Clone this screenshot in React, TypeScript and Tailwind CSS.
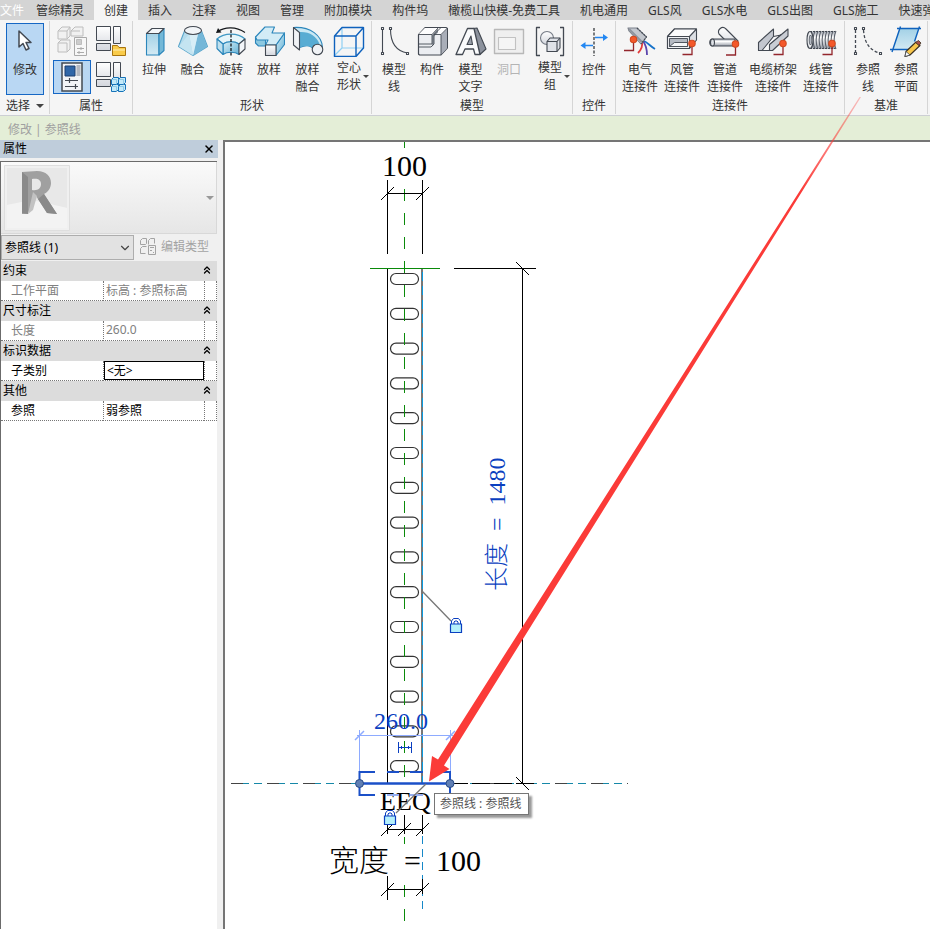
import { ChevronDown, ChevronsUp, X } from "lucide-react";
import { Fragment, useState, type ReactNode } from "react";

const DARK = "#434952";
const BLUE = "#0a3fc0";

type IconProps = { children: ReactNode };

function Icon({ children }: IconProps) {
  return (
    <svg viewBox="0 0 32 32" className="size-8 shrink-0" fill="none" strokeWidth="1.1" strokeLinejoin="round" aria-hidden="true">
      {children}
    </svg>
  );
}

function Gradients() {
  return (
    <svg className="absolute size-0" aria-hidden="true">
      <defs>
        <linearGradient id="ice" x1="0" y1="0" x2="0" y2="1">
          <stop offset="0" stopColor="#a3d1e6" />
          <stop offset="1" stopColor="#d3eaf4" />
        </linearGradient>
        <linearGradient id="sea" x1="0" y1="0" x2="1" y2="1">
          <stop offset="0" stopColor="#d8eff7" />
          <stop offset="1" stopColor="#62b1d6" />
        </linearGradient>
        <linearGradient id="steel" x1="0" y1="0" x2="0" y2="1">
          <stop offset="0" stopColor="#ffffff" />
          <stop offset="1" stopColor="#d3d6dd" />
        </linearGradient>
        <linearGradient id="tube" x1="0" y1="0" x2="0" y2="1">
          <stop offset="0" stopColor="#a2a8b2" />
          <stop offset="0.35" stopColor="#ffffff" />
          <stop offset="1" stopColor="#969ca6" />
        </linearGradient>
      </defs>
    </svg>
  );
}

function ConnectorDot({ x, y }: { x: number; y: number }) {
  return (
    <g>
      <path d={`M${x} ${y}v11h-9.500`} stroke="#93262c" strokeWidth="1.300" strokeLinejoin="miter" />
      <circle cx={x} cy={y} r="3.2" fill="#f4582a" stroke="#d04a20" />
    </g>
  );
}

const icons: Record<string, ReactNode> = {
  extrude: (
    <>
      <path d="M8.500 8.500h12.500v21.500h-12.500z" fill="url(#ice)" stroke="#2b86bb" />
      <path d="M21 8.500l5-5v22l-5 4.500z" fill="#74b8d7" stroke="#2b86bb" />
      <path d="M8.500 8.500l5.500-5h12l-5 5z" fill="#f4f7fa" stroke={DARK} />
    </>
  ),
  blend: (
    <>
      <path d="M7.500 6L1.500 21.500 16 30.500 30.500 21.500 24.500 6z" fill="#b4dbec" stroke="#5ba6cb" />
      <path d="M21 9L16 30.500 30 21.500 24.500 6z" fill="#75b7d8" />
      <path d="M12 9L16 30.500 21 9z" fill="#d8eef7" />
      <path d="M12 9L2 21.500 16 30.500z" fill="#c4e4f1" />
      <ellipse cx="16" cy="5.500" rx="8.500" ry="4" fill="#f2f5f8" stroke={DARK} />
    </>
  ),
  revolve: (
    <>
      <path d="M2 14c7-6.500 21-6.500 28 0l-6 5c-4-3-12-3-16 0z" fill="#e6f5fa" stroke="#3f98c4" />
      <path d="M8 19c4-3 12-3 16 0v10.500c-4-3-12-3-16 0z" fill="url(#sea)" stroke="#2b86bb" />
      <path d="M2 14l6 5v10.500l-6-6z" fill="#bfe0ee" stroke="#2b86bb" />
      <path d="M24 19l6-5v10l-6 5.500z" fill="#f2f5f8" stroke={DARK} />
      <path d="M3 6.500c7-5 18-5 27 1" stroke="#15181c" />
      <path d="M1 8l2-5 3.500 4.500z" fill="#15181c" />
      <path d="M16 5v26" stroke="#15181c" strokeDasharray="3 1.500" strokeWidth="1.300" />
    </>
  ),
  sweep: (
    <>
      <path d="M2.500 12v6l3 3h7v-7z" fill="#8cc8e0" stroke="#2b86bb" />
      <path d="M31.500 8v11.500L23 30.500V20z" fill="url(#sea)" stroke="#2b86bb" />
      <path d="M2.500 12L12 2h9.500L19 8h12.500L23 20H12.500l2.500-5H4z" fill="#d3ecf6" stroke="#2b86bb" />
      <path d="M12.500 20h10.500v10.500h-10.500z" fill="url(#steel)" stroke={DARK} />
    </>
  ),
  sweptBlend: (
    <>
      <path d="M1.500 2.500c17-1 28.500 8 29 20l-9 2c-2-4-7-5-14-2z" fill="#c9e8f4" stroke="#2b86bb" />
      <path d="M7.500 7c10-.500 17 4 20 12l-6 5c-2-3-7-4-14-1.500z" fill="#58acd3" />
      <path d="M1.500 2.500l6 5v17.500l-6-5z" fill="#f0f2f5" stroke={DARK} />
      <circle cx="25.500" cy="24.500" r="5.300" fill="#f0f2f5" stroke={DARK} />
    </>
  ),
  voidForm: (
    <>
      <path d="M9 3v20h21M9 23l-8 8" stroke="#8fd0f4" strokeWidth="1.200" />
      <path d="M1.500 11h21.500v20.500h-21.500zM23 11l7.500-8.500v20.500l-7.500 8.500M1.500 11l7.500-8.500h21.500" stroke="#0f62bd" strokeWidth="1.400" />
    </>
  ),
  modelLine: (
    <>
      <path d="M4.500 4v24M12.500 4c0 13 5 22 17 24" stroke={DARK} />
      <path d="M3.500 2.500h2v2h-2zM11.500 2.500h2v2h-2zM3.500 27.500h2v2h-2zM28.500 27.500h2v2h-2z" fill="#fff" stroke={DARK} />
    </>
  ),
  component: (
    <>
      <path d="M2.500 9.500l6.500-7h21l1.500 1V23L25 30H3.500l-1-1z" fill="#eceef2" stroke={DARK} />
      <path d="M25 10l6-6v19l-6 6.500z" fill="#a9aeb8" />
      <path d="M2.500 9.500L9 3h21l-5 6.500z" fill="#fdfdfe" />
      <path d="M16 10l6-6.500v4l-4 4v8l-2 2z" fill="#8f959f" />
      <path d="M2.500 9.500H16V19H3M16 9.500l6.500-7M18 9.500h7V30M18 9.500l7-7M25 9.500l6-6M3 22h12l3-3V9.500" stroke={DARK} strokeWidth="0.900" />
      <path d="M2.500 9.500v20" stroke={DARK} />
    </>
  ),
  modelText: (
    <>
      <path d="M18 3.500l4-.500 9 21-6 5.500z" fill="#8c929d" stroke={DARK} />
      <path d="M12.500 3.500H19l6 26h-5L18.500 24H10l-2.500 5.500H1z" fill="#fafbfc" stroke={DARK} strokeWidth="1.300" />
      <path d="M12 19.500l4-8.500 1.500 8.500z" fill="#9aa0aa" stroke={DARK} />
    </>
  ),
  opening: (
    <>
      <path d="M1.500 4.500h29v24h-29z" fill="#efefef" stroke="#b8b8b8" strokeWidth="1.400" />
      <path d="M5.500 12.500h17v12h-17z" fill="#f5f5f5" stroke="#c2c2c2" />
    </>
  ),
  modelGroup: (
    <>
      <path d="M6 2.500H2.500v28H6M26 2.500h3.500v28H26" stroke={DARK} strokeWidth="1.300" />
      <circle cx="13" cy="13" r="6.500" fill="url(#steel)" stroke="#757b85" />
      <path d="M13 16.500l3-3.500h10v10l-3 3.500H13z" fill="#dfe2e8" stroke={DARK} />
      <path d="M13 16.500h10v10M23 16.500l3-3.500" stroke={DARK} />
    </>
  ),
  control: (
    <>
      <path d="M16 3v28" stroke="#15181c" strokeDasharray="3 1.500" />
      <path d="M17 12.500h9M6 20.500h9" stroke="#2387f2" strokeWidth="1.600" />
      <path d="M25 9l5 3.500-5 3.500zM7.500 17l-5 3.500 5 3.500z" fill="#2387f2" />
    </>
  ),
  electrical: (
    <>
      <path d="M20 16c3 1 6 5 11 8" stroke="#1672c9" strokeWidth="1.800" />
      <path d="M19 16c3 4 4 8 4 14" stroke="#5b45ad" strokeWidth="1.800" />
      <path d="M18 16c1 5 0 8-4 12" stroke="#e23d3d" strokeWidth="1.800" />
      <path d="M4 3h9l9.500 9-5.500 7L5 6z" fill="#c3c7ce" stroke="#7c828c" />
      <path d="M5 4l13 13" stroke="#8e949e" strokeWidth="2" />
      <path d="M13 3l9.500 9-5.500 7" stroke={DARK} strokeDasharray="2 1" />
      <ConnectorDot x={9.500} y={14.500} />
    </>
  ),
  duct: (
    <>
      <path d="M1.500 11.500l7-7.500h22v11L23.500 23.500h-22z" fill="#dcdfe4" stroke={DARK} />
      <path d="M1.500 11.500l7-7.500h22l-7 7.500z" fill="#fbfbfc" stroke={DARK} />
      <path d="M1.500 11.500h22v12h-22z" fill="#f1f2f5" stroke={DARK} />
      <path d="M3.500 13.500h18v8h-18z" fill="#b5bac3" stroke={DARK} strokeWidth="0.900" />
      <path d="M3.500 21.500l5-4h13v4z" fill="#f4f5f7" stroke={DARK} strokeWidth="0.900" />
      <ConnectorDot x={26} y={18.500} />
    </>
  ),
  pipe: (
    <>
      <path d="M10 9C8 5 13 0 17 4l12 12-3 6-7-4z" fill="url(#steel)" stroke={DARK} />
      <path d="M3 14h23v7H3c-3-1-3-6 0-7z" fill="url(#tube)" stroke={DARK} />
      <ellipse cx="3.500" cy="17.500" rx="2" ry="3.500" fill="#dfe2e7" stroke={DARK} />
      <ConnectorDot x={26.500} y={19} />
    </>
  ),
  cableTray: (
    <>
      <path d="M1.500 17.500L16.500 4v8L6 25.500H1.500z" fill="#c3c7cf" stroke={DARK} />
      <path d="M5 25.500l11.500-14L24 10 13 20v5.500z" fill="#f7f8f9" stroke={DARK} />
      <path d="M12.500 19.500L31 4v7L15.500 25.500h-3z" fill="#c9cdd4" stroke={DARK} />
      <ConnectorDot x={26} y={18.500} />
    </>
  ),
  conduit: (
    <>
      <path d="M5 6.500h25.500v17H5z" fill="url(#tube)" />
      {[10, 13, 16, 19, 22, 25, 28, 31].map((x) => (
        <path key={x} d={`M${x} 6c-2.500 5-2.500 13 0 18`} stroke="#5f656f" />
      ))}
      <path d="M5 6.500h25.500M5 23.500h25.500" stroke={DARK} strokeDasharray="2 1" />
      <ellipse cx="5" cy="15" rx="3" ry="8.500" fill="#eceef1" stroke={DARK} />
      <ellipse cx="5.500" cy="15" rx="1.300" ry="5" fill="#b5bac3" stroke={DARK} strokeWidth="0.700" />
      <ConnectorDot x={27} y={18.500} />
    </>
  ),
  refLine: (
    <>
      <path d="M3.500 5v23M11.500 5c1 13 6 20 16 23" stroke={DARK} strokeDasharray="3 2" strokeWidth="1.300" />
      <path d="M2.500 2.500h2v2h-2zM10.500 2.500h2v2h-2zM2.500 27.500h2v2h-2zM27.500 27.500h2v2h-2z" fill="#fff" stroke={DARK} />
    </>
  ),
  refPlane: (
    <>
      <path d="M9.500 3.500h19l-7 21h-19z" fill="url(#ice)" />
      <path d="M7 3.500h24M0 24.500h19M10.500 1.500L2 27M29.500 1.500l-5 15" stroke="#0f62bd" strokeWidth="1.400" />
      <path d="M26 17l4 3.500L20 30l-5 1.500 1-5z" fill="#f8c64a" stroke="#3b3020" />
      <path d="M25.500 17.500l3-2 2.500 2.500-2 2.500z" fill="#a9504a" stroke="#3b3020" strokeWidth="0.800" />
      <path d="M16 26.500l4 3.500-5 1.500z" fill="#fff" stroke={DARK} strokeWidth="0.800" />
    </>
  ),
};

type ToolButtonProps = {
  icon: string;
  label: string[];
  width: string;
  menu?: boolean;
  disabled?: boolean;
};

function ToolButton({ icon, label, width, menu, disabled }: ToolButtonProps) {
  return (
    <button type="button" disabled={disabled} className={`relative flex shrink-0 flex-col items-center whitespace-nowrap disabled:text-[#b4b4b4] ${width}`}>
      <Icon>{icons[icon]}</Icon>
      <span className={menu ? "mt-0.5" : "mt-1"}>
        {label.map((line) => (
          <span key={line} className="block leading-[17px]">
            {line}
          </span>
        ))}
      </span>
      {menu ? <span className="absolute top-[50px] right-0.5 border-x-[3px] border-t-[3px] border-x-transparent border-t-[#444]" /> : null}
    </button>
  );
}

type PanelProps = {
  title: ReactNode;
  padding: string;
  children: ReactNode;
};

function Panel({ title, padding, children }: PanelProps) {
  return (
    <section className="my-px flex shrink-0 flex-col border-r border-[#d5d5d5]">
      <div className={`flex flex-1 items-start ${padding}`}>{children}</div>
      <h2 className="h-[18px] text-center leading-5">{title}</h2>
    </section>
  );
}

const tabs = [
  "管综精灵", "创建", "插入", "注释", "视图", "管理", "附加模块", "构件坞", "橄榄山快模-免费工具",
  "机电通用", "GLS风", "GLS水电", "GLS出图", "GLS施工", "快速弹",
];

function TabBar() {
  const [active, setActive] = useState("创建");

  return (
    <nav className="flex h-5 overflow-hidden bg-[#d4d4d4] whitespace-nowrap">
      <button type="button" className="shrink-0 pr-0.5 leading-[22px] text-white">
        文件
      </button>
      {tabs.map((tab) => (
        <button
          key={tab}
          type="button"
          onClick={() => setActive(tab)}
          className={`shrink-0 px-2.5 leading-[22px] ${tab === active ? "bg-[#f5f5f5]" : ""}`}
        >
          {tab}
        </button>
      ))}
    </nav>
  );
}

function Windows() {
  return (
    <path
      d="M.500.500h14v14H.500zM17.500.500h7v17h-7zM.500 17.500h14v7H.500z"
      fill="url(#steel)"
      stroke={DARK}
    />
  );
}

function PropertyButtons() {
  return (
    <div className="grid grid-cols-[38px_38px] gap-x-px gap-y-0.5">
      <button type="button" disabled aria-label="类型属性" className="flex h-[34px] items-center justify-center">
        <svg viewBox="0 0 30 30" className="size-[30px]" fill="#f1f1f1" stroke="#bdbdbd" strokeLinejoin="round">
          <path d="M1 5l4-4h8v9l-3 3H1zM14 5l4-4h8v9H14zM1 17l3-3h9v9l-3 3H1z" />
          <path d="M1 5h9v8M10 5l3-4M14 5h9M1 17h9v9" />
          <path d="M17.500 11.500h12v18h-12z" fill="#f7f7f7" stroke="#aaa" />
          <path d="M19.500 13.500h5v5h-5z" fill="#ccc" />
          <path d="M20 22.500h7M20 26.500h7M24 21v3M22 25v3" stroke="#aaa" />
        </svg>
      </button>
      <button type="button" aria-label="族类别和族参数" className="flex h-[34px] items-center justify-center">
        <svg viewBox="0 0 30 30" className="size-[30px]" fill="none">
          <Windows />
          <path d="M16.500 19.500h5l1.500 2h6.500v8h-13z" fill="#f9cb4a" stroke="#a8740f" />
          <path d="M17 24h12" stroke="#fff0b5" />
        </svg>
      </button>
      <button type="button" aria-label="属性" className="flex h-[34px] items-center justify-center border border-[#1667c4] bg-[#b9d7f3]">
        <svg viewBox="0 0 22 30" className="h-[30px] w-[22px]" fill="none">
          <path d="M1 1h20v28H1z" fill="#f2f4f7" stroke={DARK} strokeWidth="1.500" />
          <path d="M4 4h10v10H4z" fill="#2f66a8" stroke="#1c3f70" />
          <path d="M15.500 3h4v11h-4z" fill="#b3b8c1" />
          <path d="M4 18.500h13M4 24.500h13M8.500 16v5M14.500 22v5" stroke={DARK} strokeWidth="1.200" />
        </svg>
      </button>
      <button type="button" aria-label="族类型" className="flex h-[34px] items-center justify-center">
        <svg viewBox="0 0 30 30" className="size-[30px]" fill="none">
          <Windows />
          <path d="M15.500 17.500l2-2h5v5l-2 2h-5zM22.500 17.500l2-2h5v5l-2 2h-5zM15.500 24.500l2-2h5v5l-2 2h-5zM22.500 24.500l2-2h5v5l-2 2h-5z" fill="#c4e9f8" stroke="#1672b9" />
          <path d="M15.500 17.500h5v5M22.500 17.500h5v5M15.500 24.500h5v5M22.500 24.500h5v5" stroke="#7dc0e2" strokeWidth="0.800" />
        </svg>
      </button>
    </div>
  );
}

function Ribbon() {
  return (
    <div className="flex h-24 overflow-hidden border-b border-[#cdcfd4] bg-[#f5f5f5]">
      <Panel
        padding="pt-0.5 pr-[5px] pl-1.5"
        title={
          <button type="button" className="flex w-full items-center gap-1.5 pl-1.5 leading-5">
            选择
            <span className="border-x-4 border-t-4 border-x-transparent border-t-[#444]" />
          </button>
        }
      >
        <button type="button" className="flex h-[72px] w-[38px] flex-col items-center border border-[#1667c4] bg-[#b9d7f3] pt-0.5">
          <Icon>
            <path d="M10 5v16l4-3.500 3 6.500 3-1.500-3-6h5z" fill="#fff" stroke={DARK} strokeWidth="1.500" />
          </Icon>
          <span className="mt-[3px] leading-[17px]">修改</span>
        </button>
      </Panel>
      <Panel title="属性" padding="pt-[3px] pl-[3px] pr-0.5">
        <PropertyButtons />
      </Panel>
      <Panel title="形状" padding="pt-1 pl-0.5">
        <ToolButton icon="extrude" label={["拉伸"]} width="w-[38px]" />
        <ToolButton icon="blend" label={["融合"]} width="w-[39px]" />
        <ToolButton icon="revolve" label={["旋转"]} width="w-[38px]" />
        <ToolButton icon="sweep" label={["放样"]} width="w-[38px]" />
        <ToolButton icon="sweptBlend" label={["放样", "融合"]} width="w-[39px]" />
        <ToolButton icon="voidForm" label={["空心", "形状"]} width="w-[44px]" menu />
      </Panel>
      <Panel title="模型" padding="pt-1 pl-[3px]">
        <ToolButton icon="modelLine" label={["模型", "线"]} width="w-[38px]" />
        <ToolButton icon="component" label={["构件"]} width="w-[38px]" />
        <ToolButton icon="modelText" label={["模型", "文字"]} width="w-[39px]" />
        <ToolButton icon="opening" label={["洞口"]} width="w-[38px]" disabled />
        <ToolButton icon="modelGroup" label={["模型", "组"]} width="w-[44px]" menu />
      </Panel>
      <Panel title="控件" padding="pt-1">
        <ToolButton icon="control" label={["控件"]} width="w-[42px]" />
      </Panel>
      <Panel title="连接件" padding="pt-1 pl-[3px] pr-px">
        <ToolButton icon="electrical" label={["电气", "连接件"]} width="w-[42px]" />
        <ToolButton icon="duct" label={["风管", "连接件"]} width="w-[42px]" />
        <ToolButton icon="pipe" label={["管道", "连接件"]} width="w-[44px]" />
        <ToolButton icon="cableTray" label={["电缆桥架", "连接件"]} width="w-[52px]" />
        <ToolButton icon="conduit" label={["线管", "连接件"]} width="w-[44px]" />
      </Panel>
      <Panel title="基准" padding="pt-1 pl-1 pr-0.5">
        <ToolButton icon="refLine" label={["参照", "线"]} width="w-[38px]" />
        <ToolButton icon="refPlane" label={["参照", "平面"]} width="w-[38px]" />
      </Panel>
    </div>
  );
}

type Property = {
  name: string;
  value: string;
  readOnly?: boolean;
  focused?: boolean;
};

const groups: { title: string; rows: Property[] }[] = [
  { title: "约束", rows: [{ name: "工作平面", value: "标高 : 参照标高", readOnly: true }] },
  { title: "尺寸标注", rows: [{ name: "长度", value: "260.0", readOnly: true }] },
  { title: "标识数据", rows: [{ name: "子类别", value: "<无>", focused: true }] },
  { title: "其他", rows: [{ name: "参照", value: "弱参照" }] },
];

function PropertyTable() {
  return (
    <table className="w-full table-fixed border-separate border-spacing-0 bg-white text-left">
      <colgroup>
        <col className="w-[102px]" />
        <col />
        <col className="w-[13px]" />
      </colgroup>
      <tbody>
        {groups.map((group) => (
          <Fragment key={group.title}>
            <tr className="h-5 bg-[#dcdcdc]">
              <th colSpan={3} className="p-0 font-normal">
                <div className="flex h-5 items-center justify-between pl-0.5">
                  {group.title}
                  <button type="button" aria-label="折叠" className="pr-1 pb-0.5">
                    <ChevronsUp className="size-3" strokeWidth={2.5} />
                  </button>
                </div>
              </th>
            </tr>
            {group.rows.map((row) => (
              <tr key={row.name} className={row.readOnly ? "h-5 text-[#808080]" : "h-5"}>
                <th className="border-b border-dotted border-[#777] p-0 pl-2.5 leading-[18px] font-normal">
                  <label htmlFor={row.name}>{row.name}</label>
                </th>
                <td className="border-b border-l border-dotted border-[#777] p-0">
                  <input
                    id={row.name}
                    defaultValue={row.value}
                    readOnly={row.readOnly}
                    className={`block h-[19px] w-full px-0.5 pb-0.5 outline-none ${row.focused ? "border border-black" : ""}`}
                  />
                </td>
                <td className="border-x border-b border-dotted border-[#777] p-0" />
              </tr>
            ))}
          </Fragment>
        ))}
      </tbody>
    </table>
  );
}

function PropertiesPalette() {
  return (
    <aside className="flex w-[218px] shrink-0 flex-col text-black">
      <div className="flex h-[18px] items-center justify-between bg-[#bfcddb] pr-[3px] pl-[3px]">
        <h2>属性</h2>
        <button type="button" aria-label="关闭">
          <X className="size-3" strokeWidth={3} />
        </button>
      </div>
      <div className="mt-[3px] mr-px flex flex-1 flex-col border-t border-l border-[#6b6b6b] bg-white">
        <button
          type="button"
          aria-label="类型选择器"
          className="flex h-[72px] items-center justify-between border-r border-b border-[#d8d8d8] bg-linear-to-b from-[#fafafa] to-[#e6e6e6] pr-0.5 pl-[3px]"
        >
          <svg viewBox="0 0 66 66" className="size-[66px]">
            <path d="M.500.500h65v65H.500z" fill="#f0f0f0" stroke="#dedede" />
            <path d="M3 3h60v40L34 36 3 40z" fill="#e8e8e8" />
            <path d="M3 40l24-5 36 8v20H3z" fill="#f3f3f3" />
            <path fillRule="evenodd" d="M18 7l15-1c9 0 14 5 14 12 0 5-3 9-7 11l13 20-10-1-11-17-2 0-6 18h-6zM28 14v11c6 1 9-2 9-6s-3-6-9-5z" fill="#a0a0a0" />
            <path d="M18 7l6 5v37l-6-1zM40 29l13 20-10-1-9-14z" fill="#8a8a8a" />
            <path d="M24 49l5-22 4 4-4 14z" fill="#c2c2c2" />
          </svg>
          <span className="border-x-4 border-t-4 border-x-transparent border-t-[#999]" />
        </button>
        <div className="flex h-[27px] items-center bg-[#f0f0f0]">
          <div className="relative">
            <select aria-label="图元" className="h-[25px] w-[133px] appearance-none border border-[#adadad] bg-[#e2e2e2] pl-[3px]">
              <option>参照线 (1)</option>
            </select>
            <ChevronDown className="pointer-events-none absolute top-1.5 right-0.5 size-3.5 text-[#444]" />
          </div>
          <button type="button" disabled className="ml-1.5 flex items-center gap-1 pb-0.5 text-[#a3a3a3]">
            <svg viewBox="0 0 17 17" className="size-[17px]" fill="none" stroke="#a3a3a3">
              <path d="M.500 2.500l2-2h4v5l-1 1h-5zM8.500 2.500l2-2h4v5M.500 10.500l2-2h4M.500 10.500v5h5M8.500 2.500v4" />
              <path d="M8.500 7.500h7v9h-7zM10 9.500h4M10 12.500h2M13 14.500h1" />
            </svg>
            编辑类型
          </button>
        </div>
        <PropertyTable />
      </div>
    </aside>
  );
}

function Tick({ x, y, flip }: { x: number; y: number; flip?: boolean }) {
  return <path d={flip ? `M${x - 6.5} ${y - 6.5}l13 13` : `M${x - 6.5} ${y + 6.5}l13 -13`} />;
}

function Lock({ x, y }: { x: number; y: number }) {
  return (
    <g transform={`translate(${x} ${y})`}>
      <path d="M1.500 6V3l2-2.500h5l2 2.500v3M4 6V4l1-1h2l1 1v2" fill="#fff" stroke={BLUE} />
      <path d="M.500 6h11v8.500H.500z" fill="#b5f0fb" stroke={BLUE} strokeWidth="1.200" />
    </g>
  );
}

const slots = Array.from({ length: 15 }, (_, index) => 273.5 + index * 34.8);

function Drawing() {
  return (
    <svg
      viewBox="225 142 705 787"
      width="705"
      height="787"
      className="block font-['Liberation_Serif','Noto_Sans_CJK_SC',serif] font-light"
      fill="none"
      stroke="#000"
    >
      {/* section outline with slots */}
      <path d="M387.500 268V783" />
      <path d="M422 268V783" stroke="#777" strokeWidth="2" />
      <path d="M422.500 272V783" stroke="#0b9be0" strokeDasharray="9 5" />
      {slots.map((y) => (
        <rect key={y} x="390.500" y={y} width="28" height="11" rx="5.500" stroke="#333" strokeWidth="1.200" />
      ))}
      <path d="M404.500 141V148M404.500 189V782M404.500 837V844M404.500 885V922" stroke="#0a8a0a" strokeDasharray="12 12" />
      <path d="M370 268.500H440" stroke="#0a8a0a" />

      {/* top width dimension */}
      <path d="M387.500 180V254M422.500 180V254M387 193.500H423" />
      <Tick x={387.500} y={193.500} />
      <Tick x={422.500} y={193.500} />
      <text x="382" y="176" fontSize="30" fill="#000" stroke="none">100</text>

      {/* height dimension */}
      <path d="M454 268.500H536M522.500 268V783" />
      <Tick x={522.500} y={268.500} flip />
      <Tick x={522.500} y={783.500} flip />
      <text transform="translate(505 591) rotate(-90)" fontSize="24" fill={BLUE} stroke="none">
        {"长度\u00a0\u00a0=\u00a0\u00a01480"}
      </text>

      {/* reference level */}
      <path d="M231 783.500H628" stroke="#1688a8" strokeDasharray="18 5 8 5" />
      <path d="M231 783.500H628" stroke="#444" strokeDasharray="12 24" />
      <path d="M450 783.500H536" strokeDasharray="18 4" />

      {/* temporary dimension */}
      <g stroke="#8eabff">
        <path d="M359.500 730V771M450.500 730V771M357 735.500H453" />
        <path d="M355 740l9-9M446 740l9-9" strokeWidth="1.500" />
      </g>
      <text x="374" y="729" fontSize="24" fill={BLUE} stroke="none">260.0</text>
      <path d="M398.500 742V753M411.500 742V753M398 747.500H412M401.500 746v3M408.500 746v3" stroke={BLUE} />

      {/* equality dimension */}
      <path d="M387.500 824V834M404.500 815V834M422.500 815V834M387 829.500H423" />
      <Tick x={387.500} y={829.500} />
      <Tick x={404.500} y={829.500} />
      <Tick x={422.500} y={829.500} />
      <g fontSize="26" fill="#000" stroke="none">
        <text x="380" y="810">E</text>
        <text x="396" y="810">EQ</text>
      </g>

      {/* selected reference line */}
      <g stroke="#1b50c8" strokeWidth="2">
        <path d="M359 783.500H450" strokeWidth="2.500" />
        <path d="M375 772H359.500V795H375M434 772H450V795H434M387 772h12M410 772h13" />
        <path d="M387 795h12M410 795h13" stroke="#96aef0" />
      </g>
      <circle cx="359.500" cy="783.500" r="4" fill="#607fb4" stroke="#284a86" />
      <circle cx="450" cy="783.500" r="4" fill="#607fb4" stroke="#284a86" />

      <path d="M422 591L451 621M426 784L396 813" stroke="#777" strokeWidth="1.300" />
      <Lock x={450} y={618} />
      <Lock x={384} y={810} />

      {/* labelled width dimension */}
      <path d="M422.500 836V914" stroke="#1688c8" strokeDasharray="8 5" />
      <text x="329" y="871" fontSize="30" fill="#000" stroke="none">
        {"宽度\u00a0\u00a0=\u00a0\u00a0100"}
      </text>
      <path d="M387.500 876V900M422.500 879V894M387 889.500H423" />
      <Tick x={387.500} y={889.500} />
      <Tick x={422.500} y={889.500} />
    </svg>
  );
}

function GuideArrow() {
  return (
    <svg viewBox="0 0 930 929" width="930" height="929" className="pointer-events-none absolute top-0 left-0" aria-hidden="true">
      <defs>
        <linearGradient id="guide" gradientUnits="userSpaceOnUse" x1="860" y1="97" x2="800" y2="191">
          <stop offset="0" stopColor="#fb3b38" stopOpacity="0.3" />
          <stop offset="1" stopColor="#fb3b38" />
        </linearGradient>
      </defs>
      <path d="M859.500 97L438 759.500 432 756 429 781.500 449.500 769 444 765.500 861 97z" fill="url(#guide)" />
    </svg>
  );
}

export default function App() {
  return (
    <div className="relative flex min-h-screen flex-col overflow-hidden bg-[#f0f0f0] font-['Noto_Sans','Noto_Sans_CJK_SC',sans-serif] text-xs text-[#333]">
      <Gradients />
      <header>
        <TabBar />
        <Ribbon />
        <div className="h-6 bg-[#e4eed7] px-2 leading-7 text-[#a0a0a0]">修改 | 参照线</div>
      </header>
      <div className="flex flex-1">
        <PropertiesPalette />
        <main className="relative ml-[5px] min-w-0 flex-1 overflow-hidden border-t-2 border-l-2 border-[#757575] bg-white">
          <Drawing />
          <div role="tooltip" className="absolute top-[651px] left-[209px] border border-[#767676] bg-white pr-[7px] pl-[5px] leading-5 whitespace-nowrap text-[#555] shadow-[3px_3px_2px_#999]">
            参照线 : 参照线
          </div>
        </main>
      </div>
      <GuideArrow />
    </div>
  );
}
